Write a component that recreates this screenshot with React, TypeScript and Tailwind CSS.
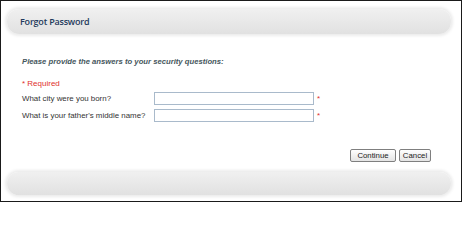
export default function App() {
  return (
    <div className="w-[462px] h-[202px] border border-[#1a1a1a] bg-white flex flex-col font-['Liberation_Sans',Arial,sans-serif]">
      {/* Header bar */}
      <div className="mt-[8px] ml-[6px] mr-[10px] h-[25px] rounded-[12px] bg-gradient-to-b from-[#f0f0f0] to-[#e1e1e1] shadow-[0_0_3px_2px_#ececec] flex items-center pl-[13px]">
        <span className="font-['Open_Sans',sans-serif] font-semibold text-[9px] tracking-[-0.2px] text-[#1f3a5c]">
          Forgot Password
        </span>
      </div>

      {/* Content */}
      <div className="pl-[21px] pr-[30px] flex flex-col">
        <p className="mt-[23px] text-[7.7px] leading-[10px] font-bold italic text-[#45565c]">
          Please provide the answers to your security questions:
        </p>
        <p className="mt-[12px] text-[8px] leading-[10px] text-[#e0302c]">* Required</p>

        <div className="mt-[3px] flex flex-col gap-[4px]">
          <div className="flex items-center h-[13px]">
            <label className="w-[132px] text-[7.9px] text-[#333]">What city were you born?</label>
            <input className="w-[160px] h-[13px] border border-[#a9bacb] bg-white outline-none" />
            <span className="ml-[3px] text-[8px] text-[#e0302c]">*</span>
          </div>
          <div className="flex items-center h-[13px]">
            <label className="w-[132px] text-[7.9px] text-[#333]">What is your father's middle name?</label>
            <input className="w-[160px] h-[13px] border border-[#a9bacb] bg-white outline-none" />
            <span className="ml-[3px] text-[8px] text-[#e0302c]">*</span>
          </div>
        </div>

        <div className="mt-[27px] flex justify-end gap-[3px]">
          <button className="w-[46px] h-[13px] border border-[#7f7f7f] rounded-[2px] bg-gradient-to-b from-white to-[#e4e4e4] text-[7.8px] leading-none text-[#222]">
            Continue
          </button>
          <button className="w-[32px] h-[13px] border border-[#7f7f7f] rounded-[2px] bg-gradient-to-b from-white to-[#e4e4e4] text-[7.8px] leading-none text-[#222]">
            Cancel
          </button>
        </div>
      </div>

      {/* Footer bar */}
      <div className="mt-[10px] ml-[6px] mr-[10px] h-[23px] rounded-[12px] bg-gradient-to-b from-[#f0f0f0] to-[#e1e1e1] shadow-[0_0_3px_2px_#ececec]" />
    </div>
  );
}
